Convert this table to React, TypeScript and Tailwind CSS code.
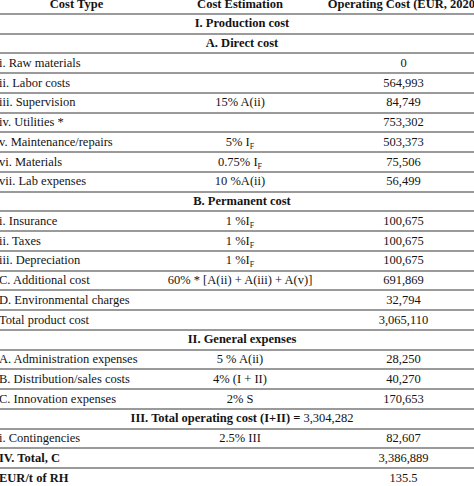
import React from "react";

type Row =
  | { kind: "section"; label: React.ReactNode }
  | { kind: "item"; type: React.ReactNode; est?: React.ReactNode; cost: string; bold?: boolean };

const IF = (
  <>
    I<sub className="text-[8px] align-baseline relative top-[3px]">F</sub>
  </>
);

const rows: Row[] = [
  { kind: "section", label: "I. Production cost" },
  { kind: "section", label: "A. Direct cost" },
  { kind: "item", type: "i. Raw materials", cost: "0" },
  { kind: "item", type: "ii. Labor costs", cost: "564,993" },
  { kind: "item", type: "iii. Supervision", est: "15% A(ii)", cost: "84,749" },
  { kind: "item", type: "iv. Utilities *", cost: "753,302" },
  { kind: "item", type: "v. Maintenance/repairs", est: <>5% {IF}</>, cost: "503,373" },
  { kind: "item", type: "vi. Materials", est: <>0.75% {IF}</>, cost: "75,506" },
  { kind: "item", type: "vii. Lab expenses", est: "10 %A(ii)", cost: "56,499" },
  { kind: "section", label: "B. Permanent cost" },
  { kind: "item", type: "i. Insurance", est: <>1 %{IF}</>, cost: "100,675" },
  { kind: "item", type: "ii. Taxes", est: <>1 %{IF}</>, cost: "100,675" },
  { kind: "item", type: "iii. Depreciation", est: <>1 %{IF}</>, cost: "100,675" },
  { kind: "item", type: "C. Additional cost", est: "60% * [A(ii) + A(iii) + A(v)]", cost: "691,869" },
  { kind: "item", type: "D. Environmental charges", cost: "32,794" },
  { kind: "item", type: "Total product cost", cost: "3,065,110" },
  { kind: "section", label: "II. General expenses" },
  { kind: "item", type: "A. Administration expenses", est: "5 % A(ii)", cost: "28,250" },
  { kind: "item", type: "B. Distribution/sales costs", est: "4% (I + II)", cost: "40,270" },
  { kind: "item", type: "C. Innovation expenses", est: "2% S", cost: "170,653" },
  {
    kind: "section",
    label: (
      <>
        III. Total operating cost (I+II) = <span className="font-normal">3,304,282</span>
      </>
    ),
  },
  { kind: "item", type: "i. Contingencies", est: "2.5% III", cost: "82,607" },
  { kind: "item", type: "IV. Total, C", cost: "3,386,889", bold: true },
  { kind: "item", type: "EUR/t of RH", cost: "135.5", bold: true },
];

const rowCls = "flex h-[19.75px] items-center border-b-2 border-[#9a9a9a]";

export default function App() {
  return (
    <div className="w-[474px] h-[486px] overflow-hidden bg-white text-[#141414]">
      <div
        className="-mt-[5px] -ml-[2px] w-[484px] text-[12.5px] leading-none"
        style={{ fontFamily: '"Liberation Serif", serif' }}
      >
        <div className={`${rowCls} font-bold`}>
          <div className="w-[157px] text-center">Cost Type</div>
          <div className="w-[170px] text-center">Cost Estimation</div>
          <div className="w-[157px] text-center whitespace-nowrap">Operating Cost (EUR, 2020)</div>
        </div>
        {rows.map((r, i) =>
          r.kind === "section" ? (
            <div key={i} className={`${rowCls} justify-center font-bold`}>
              <div className="pl-[4px]">{r.label}</div>
            </div>
          ) : (
            <div key={i} className={`${rowCls} ${r.bold ? "font-bold" : ""}`}>
              <div className="w-[157px] pl-[1px] whitespace-nowrap">{r.type}</div>
              <div className="w-[170px] text-center whitespace-nowrap">{r.est}</div>
              <div className="w-[157px] text-center font-normal">{r.cost}</div>
            </div>
          )
        )}
      </div>
    </div>
  );
}
